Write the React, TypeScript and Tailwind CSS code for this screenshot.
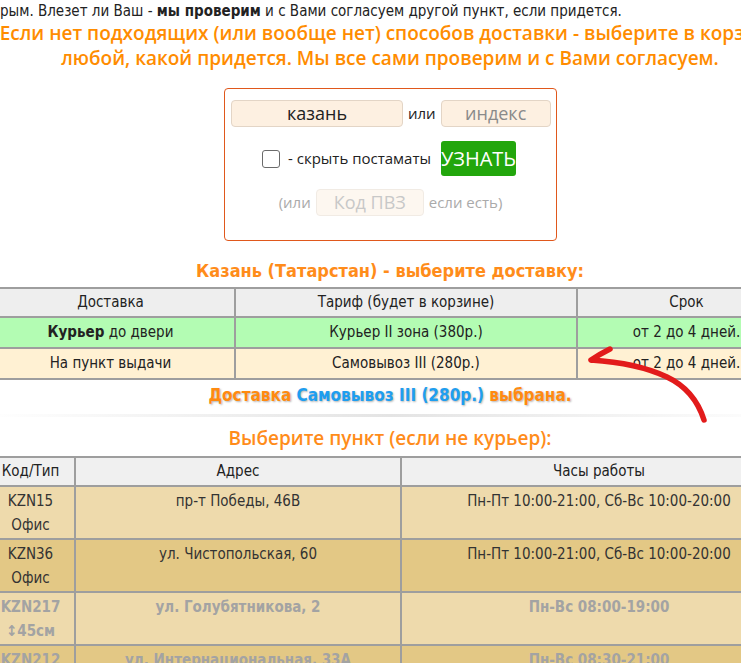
const narrow = "font-['DejaVu_Sans_Condensed',sans-serif]";

function Arrow() {
  return (
    <svg className="pointer-events-none absolute left-0 top-0" width="741" height="663" viewBox="0 0 741 663">
      <path
        d="M704 420 C 698 401, 686 386, 667 377 C 646 367, 622 362, 591 360 M591 360 C 597 356, 604 352, 610 349"
        fill="none"
        stroke="#e21b1b"
        strokeWidth="5.5"
        strokeLinecap="round"
        strokeLinejoin="round"
      />
    </svg>
  );
}

const cell = "border-2 border-[#9e9e9e]";

export default function App() {
  return (
    <div className="relative h-[663px] w-[741px] overflow-hidden bg-white text-[#222]">
      <div className="ml-[-15px] w-[810px]">
        <p className={`${narrow} ml-[15px] pt-[1px] text-[15px] leading-[20px] text-[#222]`}>
          рым. Влезет ли Ваш - <b>мы проверим</b> и с Вами согласуем другой пункт, если придется.
        </p>
        <p className="text-center font-['Open_Sans',sans-serif] text-[19px] font-semibold leading-[25px] text-[#ff8c00]">
          Если нет подходящих (или вообще нет) способов доставки - выберите в корзине любой, какой придется. Мы все сами проверим и с Вами согласуем.
        </p>

        <div className="mt-[17px] ml-[239px] w-[333px] rounded-[4px] border border-[#e0581c] px-[6px] pt-[11px] pb-[24px] font-['Open_Sans',sans-serif]">
          <div className="flex items-center gap-[5px]">
            <div className="flex h-[27px] w-[172px] shrink-0 items-center justify-center rounded-[4px] border border-[#e3d5c6] bg-[#fdf0e1] text-[18px] text-[#222]">
              казань
            </div>
            <span className="text-[15px] text-[#222]">или</span>
            <div className="flex h-[27px] w-[110px] shrink-0 items-center justify-center rounded-[4px] border border-[#e3d5c6] bg-[#fdf0e1] text-[18px] text-[#8a8a8a]">
              индекс
            </div>
          </div>
          <div className="mt-[14px] flex items-center justify-center gap-[8px] pr-[3px]">
            <span className="h-[18px] w-[18px] shrink-0 rounded-[3px] border-[1.5px] border-[#6b6b6b] bg-white" />
            <span className="text-[15px] text-[#222]">- скрыть постаматы</span>
            <span className="ml-[2px] flex h-[35px] w-[75px] shrink-0 items-center justify-center rounded-[3px] bg-[#22a60c] text-[20px] text-white">
              УЗНАТЬ
            </span>
          </div>
          <div className="mt-[13px] flex items-center justify-center gap-[5px] text-[15px] text-[#aaa]">
            <span>(или</span>
            <div className="flex h-[27px] w-[108px] shrink-0 items-center justify-center rounded-[4px] border border-[#f1ebe4] bg-[#fdf7f0] text-[18px] text-[#c8c8c8]">
              Код ПВЗ
            </div>
            <span>если есть)</span>
          </div>
        </div>

        <h2 className={`${narrow} mt-[17px] text-center text-[18px] font-bold leading-[26px] text-[#ff8c1a]`}>
          Казань (Татарстан) - выберите доставку:
        </h2>
        <table className={`${narrow} mt-[3px] w-[810px] table-fixed border-collapse text-center text-[15px] text-[#222]`}>
          <colgroup>
            <col className="w-[249px]" />
            <col className="w-[342px]" />
            <col className="w-[219px]" />
          </colgroup>
          <thead>
            <tr className="h-[29px] bg-[#eeeeee]">
              <th className={`${cell} font-normal`}>Доставка</th>
              <th className={`${cell} font-normal`}>Тариф (будет в корзине)</th>
              <th className={`${cell} font-normal`}>Срок</th>
            </tr>
          </thead>
          <tbody>
            <tr className="h-[31px] bg-[#b3fcb3]">
              <td className={cell}><b>Курьер</b> до двери</td>
              <td className={cell}>Курьер II зона (380р.)</td>
              <td className={cell}>от 2 до 4 дней.</td>
            </tr>
            <tr className="h-[31px] bg-[#fff1d3]">
              <td className={cell}>На пункт выдачи</td>
              <td className={cell}>Самовывоз III (280р.)</td>
              <td className={cell}>от 2 до 4 дней.</td>
            </tr>
          </tbody>
        </table>

        <p className={`${narrow} mt-[2px] text-center text-[17px] font-bold leading-[26px] text-[#ff8a10] [text-shadow:1px_1px_2px_#b5b5b5]`}>
          Доставка <span className="text-[#1e9ef0]">Самовывоз III (280р.)</span> выбрана.
        </p>
        <div className="mt-[6px] h-[3px] bg-gradient-to-r from-transparent via-[#e4e4e4] to-transparent" />
        <h2 className="mt-[8px] text-center font-['Open_Sans',sans-serif] text-[19px] font-semibold leading-[26px] text-[#ff8c1a]">
          Выберите пункт (если не курьер):
        </h2>

        <table className={`${narrow} mt-[5px] w-[811px] table-fixed border-collapse text-center text-[15px] text-[#333]`}>
          <colgroup>
            <col className="w-[89px]" />
            <col className="w-[326px]" />
            <col className="w-[396px]" />
          </colgroup>
          <thead>
            <tr className="h-[29px] bg-[#f0f0f0] text-[#222]">
              <th className={`${cell} font-normal`}>Код/Тип</th>
              <th className={`${cell} font-normal`}>Адрес</th>
              <th className={`${cell} font-normal`}>Часы работы</th>
            </tr>
          </thead>
          <tbody className="leading-[24px]">
            <tr className="h-[53px] bg-[#eedaac] align-top">
              <td className={`${cell} pt-[2px]`}>KZN15<br />Офис</td>
              <td className={`${cell} pt-[2px]`}>пр-т Победы, 46В</td>
              <td className={`${cell} pt-[2px]`}>Пн-Пт 10:00-21:00, Сб-Вс 10:00-20:00</td>
            </tr>
            <tr className="h-[53px] bg-[#e3c885] align-top">
              <td className={`${cell} pt-[2px]`}>KZN36<br />Офис</td>
              <td className={`${cell} pt-[2px]`}>ул. Чистопольская, 60</td>
              <td className={`${cell} pt-[2px]`}>Пн-Пт 10:00-21:00, Сб-Вс 10:00-20:00</td>
            </tr>
            <tr className="h-[53px] bg-[#eedaac] align-top font-bold text-[#a3a3a3]">
              <td className={`${cell} pt-[2px]`}>KZN217<br />↕45см</td>
              <td className={`${cell} pt-[2px]`}>ул. Голубятникова, 2</td>
              <td className={`${cell} pt-[2px]`}>Пн-Вс 08:00-19:00</td>
            </tr>
            <tr className="h-[53px] bg-[#e3c885] align-top font-bold text-[#a3a3a3]">
              <td className={`${cell} pt-[2px]`}>KZN212</td>
              <td className={`${cell} pt-[2px]`}>ул. Интернациональная, 33А</td>
              <td className={`${cell} pt-[2px]`}>Пн-Вс 08:30-21:00</td>
            </tr>
          </tbody>
        </table>
      </div>
      <Arrow />
    </div>
  );
}
